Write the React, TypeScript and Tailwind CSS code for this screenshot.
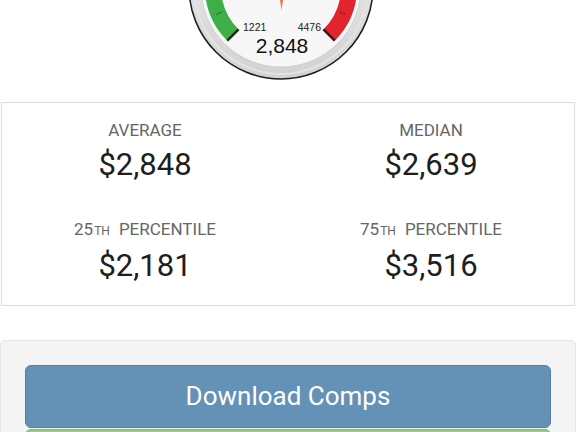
import React from "react";

const stats = [
  { label: "AVERAGE", value: "$2,848" },
  { label: "MEDIAN", value: "$2,639" },
  { label: "25", suffix: "TH", rest: "PERCENTILE", value: "$2,181" },
  { label: "75", suffix: "TH", rest: "PERCENTILE", value: "$3,516" },
];

function Gauge() {
  return (
    <svg viewBox="0 0 576 90" className="block w-full h-[90px]">
      <defs>
        <linearGradient id="bezel" x1="0" y1="0" x2="0" y2="1">
          <stop offset="0" stopColor="#f2f2f2" />
          <stop offset="1" stopColor="#d2d2d2" />
        </linearGradient>
        <linearGradient id="needle" x1="0" y1="0" x2="0" y2="1">
          <stop offset="0" stopColor="#e8401c" />
          <stop offset="1" stopColor="#f58a3a" />
        </linearGradient>
      </defs>
      <circle cx="281" cy="-13" r="92" fill="url(#bezel)" stroke="#1b1b1b" strokeWidth="1.5" />
      <circle cx="281" cy="-13" r="87" fill="none" stroke="#e4e4e4" strokeWidth="2" />
      <circle cx="281" cy="-13" r="80" fill="#f7f7f7" stroke="#c9c9c9" strokeWidth="0.8" />
      {/* green band */}
      <path d="M205 -13 A76 76 0 0 0 227.26 40.74 L238.57 29.43 A60 60 0 0 1 221 -13 Z" fill="#3dae48" />
      <line x1="227.26" y1="40.74" x2="238.57" y2="29.43" stroke="#1d2b1d" strokeWidth="2.5" />
      <line x1="216" y1="14.5" x2="222" y2="12" stroke="#2a6b2f" strokeWidth="1" />
      {/* red band */}
      <path d="M357 -13 A76 76 0 0 1 334.74 40.74 L323.43 29.43 A60 60 0 0 0 341 -13 Z" fill="#e2242f" />
      <line x1="334.74" y1="40.74" x2="323.43" y2="29.43" stroke="#3a1515" strokeWidth="2.5" />
      <line x1="346" y1="14.5" x2="340" y2="12" stroke="#8a1a20" strokeWidth="1" />
      {/* needle tail */}
      <polygon points="278.5,-13 284.5,-13 281.5,11" fill="url(#needle)" />
      <text x="243" y="31" fontSize="10.5" fill="#222" fontFamily="'Liberation Sans', Arial, sans-serif">1221</text>
      <text x="321" y="31" fontSize="10.5" fill="#222" textAnchor="end" fontFamily="'Liberation Sans', Arial, sans-serif">4476</text>
      <text x="282" y="53" fontSize="21" fill="#111" textAnchor="middle" fontFamily="'Liberation Sans', Arial, sans-serif">2,848</text>
    </svg>
  );
}

export default function App() {
  return (
    <div className="w-[576px] h-[432px] overflow-hidden bg-white font-['Roboto',sans-serif]">
      <Gauge />

      <div className="mx-px mt-[12px] border border-[#dddddd] grid grid-cols-2 gap-y-[34px] pt-[15px] pb-[21px]">
        {stats.map((s) => (
          <div key={s.value} className="flex flex-col items-center">
            <div className="text-[17px] leading-[24px] text-[#666666]">
              {s.label}
              {s.suffix && <span className="text-[12px] ml-px">{s.suffix}</span>}
              {s.rest && <span className="ml-[9px]">{s.rest}</span>}
            </div>
            <div className="mt-[5px] text-[31px] leading-[36px] text-[#1e1e1e]">{s.value}</div>
          </div>
        ))}
      </div>

      <div className="mt-[34px] bg-[#f4f4f4] border border-[#e4e4e4] rounded-[5px] px-[24px] pt-[24px] pb-[24px]">
        <button className="w-full h-[63px] bg-[#6491b6] border border-[#557ea2] rounded-[6px] text-[26px] text-white">
          Download Comps
        </button>
        <div className="mt-px w-full h-[63px] bg-[#8ccc8c] border border-[#7cbc7c] rounded-[6px]" />
      </div>
    </div>
  );
}
